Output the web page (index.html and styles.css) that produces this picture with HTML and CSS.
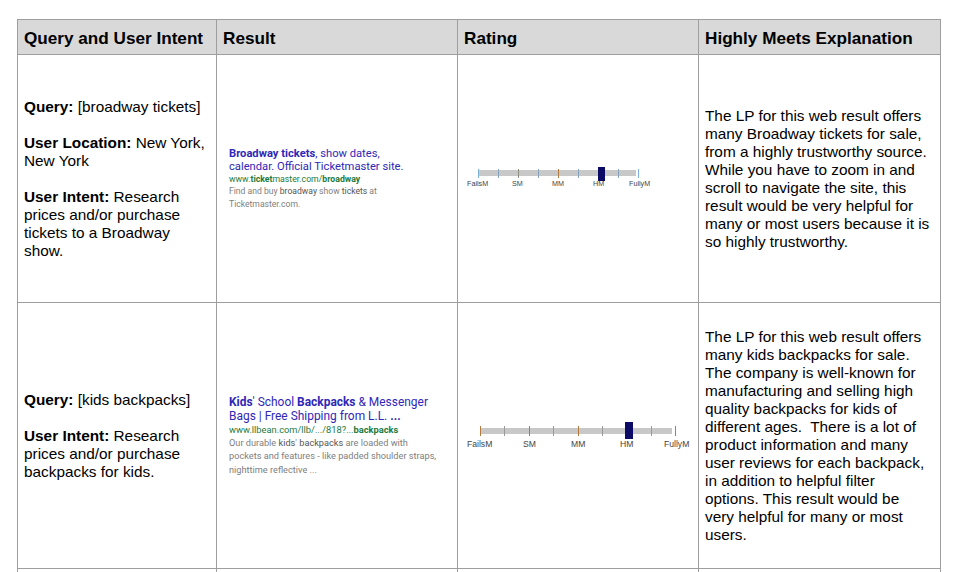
FILE: index.html
```html
<!DOCTYPE html>
<html lang="en">
<head>
<meta charset="utf-8">
<title>Highly Meets examples</title>
<link rel="stylesheet" href="styles.css">
</head>
<body>
<table class="grid">
<colgroup><col class="c1"><col class="c2"><col class="c3"><col class="c4"></colgroup>
<thead>
<tr><th>Query and User Intent</th><th>Result</th><th>Rating</th><th>Highly Meets Explanation</th></tr>
</thead>
<tbody>
<tr class="row-a">
<td>
<p><b>Query:</b> [broadway tickets]</p>
<p><b>User Location:</b> New York, New York</p>
<p><b>User Intent:</b> Research prices and/or purchase tickets to a Broadway show.</p>
</td>
<td class="result-cell">
<div class="serp serp-a">
<div class="serp-title"><b>Broadway tickets</b>, show dates, calendar. Official Ticketmaster site.</div>
<div class="serp-url">www.<b>ticket</b>master.com/<b>broadway</b></div>
<div class="serp-desc">Find and buy <em>broadway</em> show <em>tickets</em> at Ticketmaster.com.</div>
</div>
</td>
<td class="rating-cell">
<div class="scale scale-a">
<div class="track">
<i class="tick end"></i><i class="tick minor"></i><i class="tick grey"></i><i class="tick minor"></i><i class="tick orange"></i><i class="tick minor"></i><i class="tick hidden"></i><i class="tick minor"></i><i class="tick end"></i>
<span class="marker"></span>
</div>
<div class="labels"><span>FailsM</span><span>SM</span><span>MM</span><span>HM</span><span>FullyM</span></div>
</div>
</td>
<td class="explain">
<p>The LP for this web result offers many Broadway tickets for sale, from a highly trustworthy source. While you have to zoom in and scroll to navigate the site, this result would be very helpful for many or most users because it is so highly trustworthy.</p>
</td>
</tr>
<tr class="row-b">
<td>
<p><b>Query:</b> [kids backpacks]</p>
<p><b>User Intent:</b> Research prices and/or purchase backpacks for kids.</p>
</td>
<td class="result-cell">
<div class="serp serp-b">
<div class="serp-title"><b>Kids</b>' School <b>Backpacks</b> &amp; Messenger Bags | Free Shipping from L.L. <b>...</b></div>
<div class="serp-url">www.llbean.com/llb/.../818?...<b>backpacks</b></div>
<div class="serp-desc">Our durable <em>kids</em>' <em>backpacks</em> are loaded with pockets and features - like padded shoulder straps, nighttime reflective ...</div>
</div>
</td>
<td class="rating-cell">
<div class="scale scale-b">
<div class="track">
<i class="tick orange"></i><i class="tick darkminor"></i><i class="tick orange"></i><i class="tick darkminor"></i><i class="tick orange"></i><i class="tick darkminor"></i><i class="tick hidden"></i><i class="tick darkminor"></i><i class="tick orange"></i>
<span class="marker"></span>
</div>
<div class="labels"><span>FailsM</span><span>SM</span><span>MM</span><span>HM</span><span>FullyM</span></div>
</div>
</td>
<td class="explain">
<p>The LP for this web result offers many kids backpacks for sale. The company is well-known for manufacturing and selling high quality backpacks for kids of different ages.&nbsp; There is a lot of product information and many user reviews for each backpack, in addition to helpful filter options. This result would be very helpful for many or most users.</p>
</td>
</tr>
<tr class="row-c"><td></td><td></td><td></td><td></td></tr>
</tbody>
</table>
</body>
</html>
```
FILE: styles.css
```css
html, body { margin: 0; height: 572px; overflow: hidden; background: #fff; }
body { padding: 19px 0 0 17px; box-sizing: border-box; font-family: "Liberation Sans", Arial, sans-serif; color: #000; }
.grid { border-collapse: collapse; table-layout: fixed; width: 923px; }
.c1 { width: 199px; } .c2 { width: 241px; } .c3 { width: 241px; } .c4 { width: 242px; }
.grid th, .grid td { border: 1px solid #9e9e9e; padding: 0 6px; }
.grid th { background: #d9d9d9; height: 33px; padding: 1px 6px 0 6px; text-align: left; font-size: 17.15px; font-weight: 700; line-height: 20px; }
.grid td { font-size: 15.35px; line-height: 18px; vertical-align: middle; }
.grid p { margin: 0 0 18px; }
.grid p:last-child { margin-bottom: 0; }
.grid td.explain { padding-right: 8px; }
.row-a td { height: 247px; }
.row-b td { height: 265px; }
.row-c td { height: 8px; }
.grid td.result-cell { padding: 0 0 0 12px; }
.grid td.rating-cell { padding: 0 0 0 9px; }
.serp { font-family: Roboto, Arial, sans-serif; }
.serp-a { width: 182px; }
.serp-b { width: 208px; }
.serp-title { color: #2f28b6; }
.serp-a .serp-title { font-size: 11.2px; line-height: 13px; }
.serp-b .serp-title { font-size: 11.95px; line-height: 14px; }
.serp-url { color: #1e7a3c; }
.serp-a .serp-url { font-size: 8.73px; line-height: 12px; }
.serp-b .serp-url { font-size: 9.3px; line-height: 13px; }
.serp-desc { color: #808080; }
.serp-desc em { font-style: normal; color: #555; }
.serp-a .serp-desc { font-size: 8.6px; line-height: 12.5px; }
.serp-b .serp-desc { font-size: 9.2px; line-height: 13.5px; }
.scale { font-family: "Liberation Sans", Arial, sans-serif; color: #444; }
.track { position: relative; display: flex; justify-content: space-between; align-items: center; height: 10px; }
.track::before { content: ""; position: absolute; left: 0; background: #c8c8c8; }
.tick { display: block; position: relative; width: 1px; background: #8f98a4; }
.tick.end { background: #7db4dc; }
.tick.grey { background: #8d8d80; }
.tick.orange { background: #b57a3c; }
.tick.minor { background: #86a4c0; }
.tick.darkminor { background: #9a9a9a; }
.tick.hidden { background: transparent; }
.marker { position: absolute; background: #0b0a66; }
.labels { display: grid; }
.scale-a .track { width: 161px; margin-left: 11px; }
.scale-a .track::before { top: 2px; right: 3px; height: 6px; }
.scale-a .tick { height: 9px; }
.scale-a .marker { left: 120px; top: -1px; width: 7px; height: 14px; }
.scale-a .labels { grid-template-columns: 45px 40px 41px 36px auto; margin-top: 1px; font-size: 7.2px; line-height: 10px; }
.scale-b { padding-top: 4px; }
.scale-b .track { width: 196px; margin-left: 13px; }
.scale-b .track::before { top: 2px; right: 4px; height: 6px; }
.scale-b .tick { height: 10px; }
.scale-b .marker { left: 145px; top: -4px; width: 8px; height: 17px; }
.scale-b .labels { grid-template-columns: 56px 48px 49px 44px auto; margin-top: 3px; font-size: 8.6px; line-height: 11px; }
```
